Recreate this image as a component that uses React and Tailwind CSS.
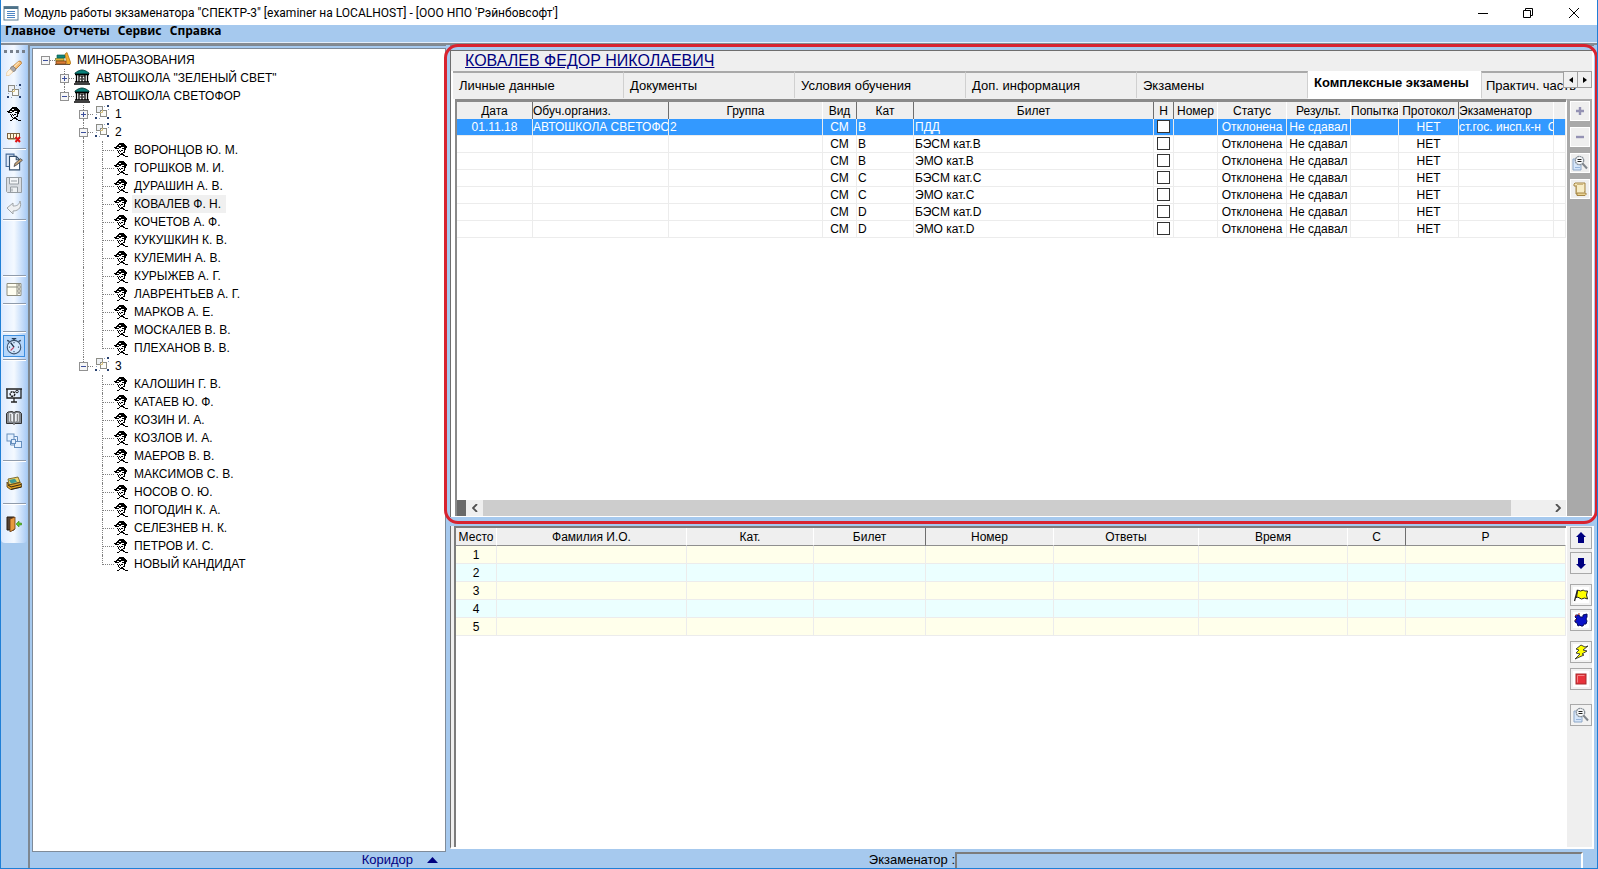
import { useState } from "react";

const groups = [
  { name: "1", open: false, people: [] },
  {
    name: "2",
    open: true,
    people: [
      "ВОРОНЦОВ Ю. М.",
      "ГОРШКОВ М. И.",
      "ДУРАШИН А. В.",
      "КОВАЛЕВ Ф. Н.",
      "КОЧЕТОВ А. Ф.",
      "КУКУШКИН К. В.",
      "КУЛЕМИН А. В.",
      "КУРЫЖЕВ А. Г.",
      "ЛАВРЕНТЬЕВ А. Г.",
      "МАРКОВ А. Е.",
      "МОСКАЛЕВ В. В.",
      "ПЛЕХАНОВ В. В.",
    ],
  },
  {
    name: "3",
    open: true,
    people: [
      "КАЛОШИН Г. В.",
      "КАТАЕВ Ю. Ф.",
      "КОЗИН И. А.",
      "КОЗЛОВ И. А.",
      "МАЕРОВ В. В.",
      "МАКСИМОВ С. В.",
      "НОСОВ О. Ю.",
      "ПОГОДИН К. А.",
      "СЕЛЕЗНЕВ Н. К.",
      "ПЕТРОВ И. С.",
      "НОВЫЙ КАНДИДАТ",
    ],
  },
];

const tabs = ["Личные данные", "Документы", "Условия обучения", "Доп. информация", "Экзамены"];

const examColumns = [
  { title: "Дата", width: "w-[76px]", dark: true },
  { title: "Обуч.организ.", width: "w-[136px]", left: true, dark: true },
  { title: "Группа", width: "w-[154px]" },
  { title: "Вид", width: "w-[34px]", dark: true },
  { title: "Кат", width: "w-[57px]", dark: true },
  { title: "Билет", width: "w-auto", dark: true },
  { title: "Н", width: "w-[20px]", dark: true },
  { title: "Номер", width: "w-[44px]" },
  { title: "Статус", width: "w-[69px]" },
  { title: "Результ.", width: "w-[64px]" },
  { title: "Попытка", width: "w-[48px]", left: true },
  { title: "Протокол", width: "w-[60px]", dark: true },
  { title: "Экзаменатор", width: "w-[95px]", left: true },
  { title: "", width: "w-[12px]" },
];

const exams = [
  { date: "01.11.18", school: "АВТОШКОЛА СВЕТОФО", group: "2", cat: "B", ticket: "ПДД", examiner: "ст.гос. инсп.к-н  С" },
  { cat: "B", ticket: "БЭСМ кат.B" },
  { cat: "B", ticket: "ЭМО кат.B" },
  { cat: "C", ticket: "БЭСМ кат.C" },
  { cat: "C", ticket: "ЭМО кат.C" },
  { cat: "D", ticket: "БЭСМ кат.D" },
  { cat: "D", ticket: "ЭМО кат.D" },
];

const seatColumns = [
  { title: "Место", width: "w-[41px]" },
  { title: "Фамилия И.О.", width: "w-[190px]" },
  { title: "Кат.", width: "w-[127px]" },
  { title: "Билет", width: "w-[112px]", dark: true },
  { title: "Номер", width: "w-[128px]" },
  { title: "Ответы", width: "w-[145px]" },
  { title: "Время", width: "w-[149px]" },
  { title: "С", width: "w-[58px]", dark: true },
  { title: "Р", width: "w-auto" },
];

/* ---------- icons ---------- */

function Svg({ size = 16, children }) {
  return (
    <svg width={size} height={size} viewBox="0 0 16 16" fill="none" className="shrink-0" aria-hidden="true">
      {children}
    </svg>
  );
}

function AppIcon() {
  return (
    <Svg>
      <rect x="1" y="1.5" width="14" height="13.5" fill="#fff" stroke="#5d7f96" />
      <path d="M1 3h14" stroke="#4d7288" strokeWidth="2" />
      <path d="M4 6.5h8M4 8.5h8M4 10.5h8M4 12.5h8" stroke="#4f86c4" />
    </Svg>
  );
}

function PersonIcon() {
  return (
    <svg width="14" height="14" viewBox="0 0 14 14" fill="none" className="shrink-0" aria-hidden="true">
      <path d="M4 1h1V0h5v1h1v1h1v1h1v2h-1v2h-1v1h-1V6H8V5H5v1H1V5H0V4h2V3h1V2h1z" fill="#000" />
      <path d="M5 2h2v1H5zM7 4h3v1H7zM3 4h2v1H3z" fill="#fff" />
      <path d="M3 7h1v1H3zM5 7h1v1H5zM7 7h2v1H7zM4 8h1v2H4zM6 8h1v1H6zM10 8h1v2h-1zM5 10h1v1H5zM7 10h2v1H7zM9 9h1v1H9zM6 11h3v1H6zM5 12h1v1H5zM9 11h1v2H9zM10 12h1v1h-1zM11 13h3v1h-3zM3 13h2v1H3z" fill="#000" />
    </svg>
  );
}

function GroupIcon() {
  return (
    <svg width="14" height="14" viewBox="0 0 14 14" fill="none" className="shrink-0" aria-hidden="true">
      <rect x="1.5" y="1.5" width="6" height="6" fill="#eef1f4" stroke="#8d8d86" />
      <rect x="5.500" y="5.500" width="6" height="6" fill="#fcfcf8" stroke="#8d8d86" />
      <path d="M7.500 5v2.500H5" stroke="#d3bd7a" />
      <path d="M12 0h2v2h-2zM0 12h2v2H0zM12 12h2v2h-2z" fill="#27406f" />
      <path d="M9 1h1v1H9zM1 9h1v1H1zM4 13h1v1H4zM13 4h1v1h-1z" fill="#8fa3c0" />
    </svg>
  );
}

function BooksIcon() {
  return (
    <Svg>
      <path d="M2 4h8v3H2z" fill="#13857b" stroke="#075e55" strokeWidth=".7" />
      <path d="M0 7.500h9v2.500H1z" fill="#e3b23a" stroke="#5d7a2c" strokeWidth=".7" />
      <path d="M1 10h10v3H1z" fill="#dc7c35" stroke="#7b4618" strokeWidth=".8" />
      <path d="M10 3l2-1.500 4 11-2 1h-2z" fill="#f2ad2c" stroke="#a36a12" strokeWidth=".7" />
      <path d="M0 13.500h15" stroke="#6a5237" />
    </Svg>
  );
}

function SchoolIcon() {
  return (
    <Svg>
      <path d="M1 5V4l3-2 3-1h2l3 1 3 2v1z" fill="#08817b" stroke="#023c3a" strokeWidth=".8" />
      <path d="M1 5.500h14M0 15h16M1 13h14" stroke="#000" strokeWidth="1.500" />
      <path d="M2.500 6v7M5 6v7M8 7v6M11 6v7M13.500 6v7" stroke="#000" strokeWidth="1.300" />
      <path d="M5 7h6" stroke="#000" />
      <path d="M6.800 9v2M9.300 9v2" stroke="#000" strokeWidth=".7" />
    </Svg>
  );
}

function HandIcon() {
  return (
    <Svg>
      <path d="M6 7l7-6 2 .5.500 2L9 10z" fill="#f5be78" stroke="#b97425" strokeWidth=".8" />
      <path d="M8 7l5-5" stroke="#fde3b8" strokeWidth="1.200" />
      <path d="M5 7l2-1 3 3-1 2-3 1-2-2z" fill="#a9a7a8" stroke="#77716f" strokeWidth=".7" />
      <path d="M4 9l3 3-4 3.500H0L1 12z" fill="#fff3df" stroke="#e6c79b" strokeWidth=".7" />
    </Svg>
  );
}

function AbacusIcon() {
  return (
    <Svg>
      <rect x="1.500" y="4.500" width="12" height="5" fill="#fff6d8" stroke="#7d6140" />
      <path d="M4.500 5v4M7.500 5v4M10.500 5v4" stroke="#7d6140" />
      <path d="M2 10.500h8" stroke="#c7b489" />
      <path d="M9.500 8l4.500 5M14 8l-4.500 5" stroke="#e01212" strokeWidth="2" />
    </Svg>
  );
}

function CopyEditIcon() {
  return (
    <Svg size={18}>
      <path d="M1 1h7v11H1z" fill="#dce9fa" stroke="#456b9b" />
      <path d="M4 3h6l3 3v9H4z" fill="#fff" stroke="#35506e" />
      <path d="M10 3v3h3" stroke="#35506e" />
      <path d="M8 12l1-3 5-4 1.500 1.500-5 4z" fill="#c7a274" stroke="#444" strokeWidth=".7" />
    </Svg>
  );
}

function SaveIcon() {
  return (
    <Svg>
      <path d="M.5.500h15v15h-14l-1-1z" fill="#d9dde2" stroke="#969da3" />
      <path d="M3.500 1v6h9V1" fill="#f4f6f8" stroke="#969da3" />
      <path d="M4.500 15v-5h7v5" fill="#eef1f3" stroke="#969da3" />
      <path d="M6 11.500v3M5 4h6" stroke="#969da3" />
    </Svg>
  );
}

function UndoIcon() {
  return (
    <Svg>
      <path d="M1 8l6-5v3c4 0 6-1 7-5 2 5-.5 10-7 10v3z" fill="#eef0f2" stroke="#9fa4a8" />
    </Svg>
  );
}

function PanelIcon() {
  return (
    <Svg>
      <path d="M1 1.500h14v12H1z" fill="#fffef0" stroke="#8e8e80" />
      <path d="M1 5h10M11 1v13M11 5h4M11 9h4" stroke="#8e8e80" />
      <path d="M12.500 3h1M12.500 7h1M12.500 11h1" stroke="#222" strokeWidth="1.500" />
    </Svg>
  );
}

function ClockIcon() {
  return (
    <Svg size={18}>
      <circle cx="8" cy="9" r="6" fill="#d5e9ff" stroke="#3e5571" />
      <path d="M6 1.500h4M2 3l2 1M14 3l-2 1M8 1v2" stroke="#253a55" strokeWidth="1.200" />
      <path d="M8 9L5 5" stroke="#20344c" strokeWidth="1.300" />
      <path d="M8 9l-3 3" stroke="#c04664" />
      <path d="M8 4.500v1M12.500 9h-1M8 13.500v-1M3.500 9h1" stroke="#3e5571" />
    </Svg>
  );
}

function BoardIcon() {
  return (
    <Svg>
      <path d="M0 2h16M1 2v9h14V2M8 11v4M5 15h6" stroke="#222" strokeWidth="1.300" />
      <circle cx="6.500" cy="7" r="2.300" stroke="#222" strokeWidth="1.500" strokeDasharray="2 .6" />
      <circle cx="11" cy="4.500" r="1.300" stroke="#222" />
    </Svg>
  );
}

function BookIcon() {
  return (
    <Svg>
      <path d="M.5 3.500L2 2l4-.5 2 1 2-1 4 .5 1.500 1.500v10H9l-1 1-1-1H.5z" fill="#858b93" stroke="#333" />
      <path d="M2.500 3l3-.5L7.500 4v8.500l-2-1-3 .5zM13.500 3l-3-.5-2 1.500v8.500l2-1 3 .5z" fill="#eef2f6" stroke="#666" strokeWidth=".6" />
      <path d="M4.500 4v7M11.500 4v7" stroke="#888" strokeWidth="1.500" />
    </Svg>
  );
}

function SquaresIcon() {
  return (
    <Svg>
      <path d="M8 3.500h3.500V9M8.500 12H4.500V7" stroke="#668fbe" />
      <rect x="1" y="1" width="7" height="7" fill="#e4f0fe" stroke="#668fbe" />
      <rect x="8.500" y="8.500" width="7" height="6" fill="#e4f0fe" stroke="#668fbe" />
      <rect x="5.500" y="6.500" width="4" height="4" fill="#e4f0fe" stroke="#668fbe" />
    </Svg>
  );
}

function CardsIcon() {
  return (
    <Svg>
      <path d="M2 4l10-2 2 5-11 3z" fill="#f0d466" stroke="#655216" strokeWidth=".8" />
      <path d="M3 5l6-1.300L11 7 5 8.500z" fill="#3f9b94" />
      <path d="M1 7l2 3 11-2.500 1.500 1V12l-11 2.500L1 12z" fill="#e3a528" stroke="#4c3810" strokeWidth=".8" />
      <path d="M2 10l3 2 10-2.500M5 14.500l10.500-2.500" stroke="#312512" />
    </Svg>
  );
}

function DoorIcon() {
  return (
    <Svg>
      <path d="M1 1h7v13H1z" fill="#554437" stroke="#271c15" />
      <path d="M4 3l5-2v12l-5 3z" fill="#e89a3f" stroke="#633711" strokeWidth=".8" />
      <path d="M10 8l3-3v2h2.500v2H13v2z" fill="#63c32b" stroke="#39871a" strokeWidth=".6" />
    </Svg>
  );
}

function SearchDocIcon() {
  return (
    <Svg>
      <path d="M1 4h8v11H1z" fill="#d6e6fa" stroke="#8da7c7" />
      <circle cx="7.500" cy="5.500" r="4.200" fill="#f7f9fb" stroke="#8a929a" strokeWidth="1.300" strokeDasharray="2 .4" />
      <path d="M5.500 4.500h4M5.500 6.500h4" stroke="#222" />
      <path d="M10.500 8.500l4.500 5" stroke="#80868c" strokeWidth="2" />
      <path d="M3 12.500h5" stroke="#96b5dc" />
    </Svg>
  );
}

function ScrollIcon() {
  return (
    <Svg>
      <path d="M3 2h10v9h-2V4H5v9H4V5H2V3z" fill="#f4e6b8" stroke="#a48545" />
      <path d="M5 4h7v8H5z" fill="#f7ecc6" />
      <path d="M5 12h9v1.500l-1 1H5z" fill="#ead393" stroke="#a48545" />
    </Svg>
  );
}

function PlusIcon() {
  return (
    <Svg>
      <path d="M8 4v8M4 8h8" stroke="#9492b4" strokeWidth="2.400" />
    </Svg>
  );
}

function MinusIcon() {
  return (
    <Svg>
      <path d="M4 8h8" stroke="#9492b4" strokeWidth="2.400" />
    </Svg>
  );
}

function UpIcon() {
  return (
    <Svg>
      <path d="M8 2l5 5h-2v6H5V7H3z" fill="#000080" />
    </Svg>
  );
}

function DownIcon() {
  return (
    <Svg>
      <path d="M8 14l5-5h-2V3H5v6H3z" fill="#000080" />
    </Svg>
  );
}

function FlagIcon() {
  return (
    <Svg>
      <rect width="16" height="16" fill="#fff" />
      <path d="M4.500 3l3 1 3-1 1 1h3l-1 4 1 4-3-1-3 1-4-2-1 1z" fill="#ffff00" stroke="#222" />
      <path d="M4.500 3L1.500 14" stroke="#222" strokeWidth="1.300" />
    </Svg>
  );
}

function BlobIcon() {
  return (
    <Svg>
      <rect width="16" height="16" fill="#fff" />
      <path d="M3 3h3l1 2h3V3l4-1v3l-1 2 1 2-1 3h-2l-1 2H8l-1-1-2 1-1-3-2-1V8l2-1-2-2z" fill="#0a12c8" stroke="#04095f" />
      <path d="M2 3l2 1M5 2h2M2 8h1" stroke="#b7321c" />
    </Svg>
  );
}

function BoltIcon() {
  return (
    <Svg>
      <rect width="16" height="16" fill="#fff" />
      <path d="M8 1L3 5l3 1-3 3 4 1-5 5 9-4-2-1 5-3-4-1 5-4-3 1z" fill="#ffff00" stroke="#333" strokeWidth=".9" />
    </Svg>
  );
}

function StopIcon() {
  return (
    <Svg>
      <rect width="16" height="16" fill="#fff" />
      <rect x="3" y="3" width="10" height="10" fill="#e8323b" stroke="#a72a2c" />
      <path d="M4.500 11.500v-7h7" stroke="#f58487" />
    </Svg>
  );
}

/* ---------- left toolbar ---------- */

function ToolButton({ label, icon, active }) {
  return (
    <button
      type="button"
      aria-label={label}
      className={
        active
          ? "flex h-[22px] w-[22px] items-center justify-center border border-[#3d8fe0] bg-[#b4d6fb]"
          : "flex h-[23px] w-6 items-center justify-center"
      }
    >
      {icon}
    </button>
  );
}

function Separator() {
  return <div className="h-[2px] w-[23px] shrink-0 border-t border-[#8f9bab] bg-white" />;
}

function Toolbar() {
  return (
    <div className="w-[26px] shrink-0 self-stretch">
      <div className="flex flex-col items-center rounded-b-sm bg-linear-to-r from-[#dceaff] via-[#f4f9ff] to-[#a9cbf5] pt-px">
        <div className="flex h-[10px] items-center gap-[3px]">
          {[0, 1, 2, 3].map((i) => (
            <span key={i} className="size-[3px] bg-[#77808c]" />
          ))}
        </div>
        <ToolButton label="Указать" icon={<HandIcon />} />
        <ToolButton label="Группы" icon={<GroupIcon />} />
        <ToolButton label="Кандидат" icon={<PersonIcon />} />
        <ToolButton label="Удалить" icon={<AbacusIcon />} />
        <Separator />
        <ToolButton label="Изменить" icon={<CopyEditIcon />} />
        <ToolButton label="Сохранить" icon={<SaveIcon />} />
        <ToolButton label="Отменить" icon={<UndoIcon />} />
        <Separator />
        <div className="h-[54px]" />
        <Separator />
        <div className="flex h-[26px] items-center">
          <ToolButton label="Панель" icon={<PanelIcon />} />
        </div>
        <Separator />
        <div className="h-[26px]" />
        <Separator />
        <div className="flex h-[26px] items-center">
          <ToolButton label="Время" icon={<ClockIcon />} active />
        </div>
        <Separator />
        <div className="pt-[22px] pb-2">
          <ToolButton label="Настройка" icon={<BoardIcon />} />
          <ToolButton label="Журнал" icon={<BookIcon />} />
          <ToolButton label="Связи" icon={<SquaresIcon />} />
        </div>
        <Separator />
        <div className="flex h-[41px] items-center">
          <ToolButton label="Архив" icon={<CardsIcon />} />
        </div>
        <Separator />
        <div className="flex h-[38px] items-center">
          <ToolButton label="Выход" icon={<DoorIcon />} />
        </div>
      </div>
    </div>
  );
}

/* ---------- tree ---------- */

function Guide({ line }) {
  return (
    <span className="h-full w-[19px] shrink-0 pl-1">
      {line && <span className="block h-full border-l border-dotted border-[#808080]" />}
    </span>
  );
}

function Expander({ open, label, onClick, up, down }) {
  return (
    <span className="flex h-full w-[14px] shrink-0 items-center">
      <span className="flex h-full w-[9px] flex-col items-center">
        <span className={up ? "h-[5px] border-l border-dotted border-[#808080]" : "h-[5px]"} />
        <button
          type="button"
          aria-label={label}
          aria-expanded={open}
          onClick={onClick}
          className="relative flex size-[9px] shrink-0 items-center justify-center border border-[#919191] bg-[#f6f6f6]"
        >
          <span className="h-px w-[5px] bg-[#3c4f9c]" />
          {!open && <span className="absolute h-[5px] w-px bg-[#3c4f9c]" />}
        </button>
        <span className={down ? "grow border-l border-dotted border-[#808080]" : "grow"} />
      </span>
      <span className="w-[5px] border-t border-dotted border-[#808080]" />
    </span>
  );
}

function Tree() {
  const [selected, setSelected] = useState("КОВАЛЕВ Ф. Н.");
  const [open, setOpen] = useState(groups.map((g) => g.open));

  const toggle = (i) => setOpen((prev) => prev.map((v, n) => (n === i ? !v : v)));

  return (
    <div className="min-h-0 grow overflow-hidden border border-[#7f8b99] bg-white pt-[2px] pl-2 text-[12px] leading-[18px]">
      <div className="flex h-[18px]">
        <Expander open label="МИНОБРАЗОВАНИЯ" />
        <BooksIcon />
        <span className="pl-[6px]">МИНОБРАЗОВАНИЯ</span>
      </div>
      <div className="flex h-[18px]">
        <Guide />
        <Expander open={false} label="ЗЕЛЕНЫЙ СВЕТ" up down />
        <SchoolIcon />
        <span className="pl-[6px]">АВТОШКОЛА "ЗЕЛЕНЫЙ СВЕТ"</span>
      </div>
      <div className="flex h-[18px]">
        <Guide />
        <Expander open label="СВЕТОФОР" up />
        <SchoolIcon />
        <span className="pl-[6px]">АВТОШКОЛА СВЕТОФОР</span>
      </div>
      {groups.map((group, i) => (
        <div key={group.name}>
          <div className="flex h-[18px]">
            <Guide />
            <Guide />
            <Expander
              open={open[i]}
              label={"Группа " + group.name}
              onClick={() => toggle(i)}
              up
              down={i < groups.length - 1}
            />
            <span className="pl-[2px]">
              <GroupIcon />
            </span>
            <span className="pl-[6px]">{group.name}</span>
          </div>
          {open[i] &&
            group.people.map((name, n) => (
              <div key={name} className="flex h-[18px]">
                <Guide />
                <Guide />
                <Guide line={i < groups.length - 1} />
                <span className="flex w-[16px] shrink-0 pl-1">
                  <span
                    className={
                      n === group.people.length - 1
                        ? "h-[10px] border-l border-dotted border-[#808080]"
                        : "h-[18px] border-l border-dotted border-[#808080]"
                    }
                  />
                  <span className="h-[10px] grow border-b border-dotted border-[#808080]" />
                </span>
                <span className="pt-[2px]">
                  <PersonIcon />
                </span>
                <button
                  type="button"
                  onClick={() => setSelected(name)}
                  className={
                    selected === name
                      ? "ml-1 bg-[#f0f0f0] pr-[5px] pl-[2px] whitespace-nowrap"
                      : "ml-1 pr-[5px] pl-[2px] whitespace-nowrap"
                  }
                >
                  {name}
                </button>
              </div>
            ))}
        </div>
      ))}
    </div>
  );
}

/* ---------- exams ---------- */

function Tabs() {
  return (
    <div className="relative flex h-7 shrink-0 overflow-hidden text-[13px]">
      <div className="w-[2px] shrink-0 bg-white" />
      {tabs.map((tab) => (
        <button
          key={tab}
          type="button"
          className="mb-px w-[171px] shrink border-t-2 border-r border-t-[#a9a9a9] border-r-[#d0d0d0] bg-[#efefef] pl-[6px] text-left whitespace-nowrap"
        >
          {tab}
        </button>
      ))}
      <button type="button" className="w-[173px] shrink-0 bg-white pb-1 pl-[6px] text-left font-bold whitespace-nowrap">
        Комплексные экзамены
      </button>
      <button
        type="button"
        className="mb-px min-w-0 grow border-t-2 border-l border-t-[#a9a9a9] border-l-[#d0d0d0] bg-[#efefef] pl-1 text-left whitespace-nowrap"
      >
        Практич. часть
      </button>
      <div className="absolute top-0 right-0 flex">
        <button type="button" aria-label="Назад" className="flex h-[17px] w-[15px] items-center justify-center border border-[#a0a0a0] bg-[#f0f0f0]">
          <svg width="4" height="6" viewBox="0 0 4 6" aria-hidden="true">
            <path d="M4 0v6L0 3z" />
          </svg>
        </button>
        <button type="button" aria-label="Вперед" className="flex h-[17px] w-[14px] items-center justify-center border border-l-0 border-[#a0a0a0] bg-[#f0f0f0]">
          <svg width="4" height="6" viewBox="0 0 4 6" aria-hidden="true">
            <path d="M0 0v6l4-3z" />
          </svg>
        </button>
      </div>
    </div>
  );
}

function ExamTable() {
  const cell = "overflow-hidden border-r border-b border-[#ececec] p-0 whitespace-pre";

  return (
    <table className="w-full table-fixed border-separate border-spacing-0 text-[12px] leading-4">
      <thead>
        <tr className="h-[17px] bg-[#efefef]">
          {examColumns.map((col) => (
            <th
              key={col.title}
              className={
                "overflow-hidden border-r p-0 font-normal whitespace-nowrap " +
                col.width +
                (col.dark ? " border-[#6e6e6e]" : " border-white") +
                (col.left ? " text-left" : " text-center")
              }
            >
              {col.title}
            </th>
          ))}
        </tr>
      </thead>
      <tbody>
        {exams.map((exam, i) => (
          <tr key={i} className={i === 0 ? "h-[17px] bg-[#3399ff] text-white" : "h-[17px]"}>
            <td className={cell + " text-center"}>{exam.date}</td>
            <td className={cell}>{exam.school}</td>
            <td className={cell + " pl-px"}>{exam.group}</td>
            <td className={cell + " text-center"}>СМ</td>
            <td className={cell + " pl-px"}>{exam.cat}</td>
            <td className={cell + " pl-px"}>{exam.ticket}</td>
            <td className={cell}>
              <input
                type="checkbox"
                aria-label={"Н " + exam.ticket}
                className="mx-auto mb-[2px] block size-[13px] appearance-none border border-[#333] bg-white checked:bg-[#333]"
              />
            </td>
            <td className={cell} />
            <td className={cell + " text-center"}>Отклонена</td>
            <td className={cell + " text-center"}>Не сдавал</td>
            <td className={cell} />
            <td className={cell + " text-center"}>НЕТ</td>
            <td className={cell}>{exam.examiner}</td>
            <td className={cell} />
          </tr>
        ))}
      </tbody>
    </table>
  );
}

function ExamPanel() {
  const side = "flex size-5 items-center justify-center border border-white bg-[#efefef]";

  return (
    <section className="relative flex min-h-0 flex-[466] flex-col border-t border-r-2 border-l border-t-[#6e6e6e] border-r-white border-l-[#6e6e6e] bg-[#efefef]">
      <h1 className="h-5 shrink-0 pl-[14px] text-[16px] leading-[19px] text-[#000080] underline">
        КОВАЛЕВ ФЕДОР НИКОЛАЕВИЧ
      </h1>
      <Tabs />
      <div className="flex min-h-0 grow border-b border-l-4 border-white">
        <div className="flex min-w-0 grow flex-col border-t-3 border-l-2 border-[#8a8a8a] bg-white">
          <div className="min-h-0 grow overflow-hidden">
            <ExamTable />
          </div>
          <div className="flex h-4 shrink-0 items-center bg-[#efefef]">
            <span className="h-full w-[9px] bg-[#696969]" />
            <button type="button" aria-label="Влево" className="flex w-[17px] justify-center">
              <svg width="6" height="8" viewBox="0 0 6 8" fill="none" aria-hidden="true">
                <path d="M5 0L1 4l4 4" stroke="#505050" strokeWidth="1.8" />
              </svg>
            </button>
            <span className="h-full grow bg-[#cdcdcd]" />
            <span className="h-full w-[38px]" />
            <button type="button" aria-label="Вправо" className="flex w-[17px] justify-center">
              <svg width="6" height="8" viewBox="0 0 6 8" fill="none" aria-hidden="true">
                <path d="M1 0l4 4-4 4" stroke="#505050" strokeWidth="1.8" />
              </svg>
            </button>
          </div>
        </div>
        <div className="flex w-[26px] shrink-0 flex-col items-center gap-[6px] border-t-2 border-l border-t-[#a9a9a9] border-l-white bg-[#a9a9a9]">
          <button type="button" aria-label="Добавить" className={side}>
            <PlusIcon />
          </button>
          <button type="button" aria-label="Убрать" className={side}>
            <MinusIcon />
          </button>
          <button type="button" aria-label="Просмотр" className={side}>
            <SearchDocIcon />
          </button>
          <button type="button" aria-label="Протокол" className={side}>
            <ScrollIcon />
          </button>
        </div>
      </div>
      <div className="pointer-events-none absolute -top-[7px] -right-[6px] -bottom-[7px] -left-[7px] rounded-[14px] border-3 border-[#d8232f]" />
    </section>
  );
}

/* ---------- seats ---------- */

function SeatPanel() {
  const side = "flex size-[22px] items-center justify-center border border-[#a9a9a9] bg-[#f2f2f2]";

  return (
    <section className="flex min-h-0 grow border-b-2 border-l border-b-white border-l-[#6e6e6e] bg-[#efefef] pl-[3px]">
      <div className="min-w-0 grow overflow-hidden border-t-2 border-l-2 border-[#7c7c7c] bg-white">
        <table className="w-full table-fixed border-separate border-spacing-0 text-[12px] leading-4">
          <thead>
            <tr className="h-[18px] bg-[#efefef]">
              {seatColumns.map((col) => (
                <th
                  key={col.title}
                  className={
                    "border-r border-b border-b-[#8f8f8f] p-0 text-center font-normal whitespace-nowrap " +
                    col.width +
                    (col.dark ? " border-r-[#6e6e6e]" : " border-r-white")
                  }
                >
                  {col.title}
                </th>
              ))}
            </tr>
          </thead>
          <tbody>
            {[1, 2, 3, 4, 5].map((n) => (
              <tr key={n} className={n % 2 ? "h-[18px] bg-[#ffffeb]" : "h-[18px] bg-[#ebffff]"}>
                {seatColumns.map((col, i) => (
                  <td key={col.title} className="border-r border-b border-[#ececec] p-0 text-center">
                    {i === 0 && n}
                  </td>
                ))}
              </tr>
            ))}
          </tbody>
        </table>
      </div>
      <div className="flex w-7 shrink-0 flex-col items-end gap-[10px] border-r-2 border-l border-white pt-px">
        <div className="flex flex-col gap-[3px]">
          <button type="button" aria-label="Вверх" className={side}>
            <UpIcon />
          </button>
          <button type="button" aria-label="Вниз" className={side}>
            <DownIcon />
          </button>
        </div>
        <div className="flex flex-col gap-[3px]">
          <button type="button" aria-label="Старт" className={side}>
            <FlagIcon />
          </button>
          <button type="button" aria-label="Сброс" className={side}>
            <BlobIcon />
          </button>
        </div>
        <div className="flex flex-col gap-[5px]">
          <button type="button" aria-label="Быстро" className={side}>
            <BoltIcon />
          </button>
          <button type="button" aria-label="Стоп" className={side}>
            <StopIcon />
          </button>
        </div>
        <button type="button" aria-label="Просмотр билета" className={side + " mt-1"}>
          <SearchDocIcon />
        </button>
      </div>
    </section>
  );
}

export default function App() {
  return (
    <div className="flex h-screen flex-col overflow-hidden border-x border-b border-[#1f7fd6] bg-[#a6c9ee] font-['Liberation_Sans',Arial,sans-serif] text-black">
      <header className="flex h-[25px] shrink-0 items-center bg-white pl-[2px]">
        <AppIcon />
        <span className="grow pl-[5px] font-[Roboto,sans-serif] text-[12px]">
          Модуль работы экзаменатора "СПЕКТР-3" [examiner на LOCALHOST] - [ООО НПО 'Рэйнбовсофт']
        </span>
        <div className="flex">
          <button type="button" aria-label="Свернуть" className="flex w-[45px] justify-center">
            <svg width="10" height="10" viewBox="0 0 10 10" stroke="#000" fill="none" aria-hidden="true">
              <path d="M0 5.500h10" />
            </svg>
          </button>
          <button type="button" aria-label="Окно" className="flex w-[45px] justify-center">
            <svg width="10" height="10" viewBox="0 0 10 10" stroke="#000" fill="none" aria-hidden="true">
              <path d="M.5 2.500h7v7h-7zM2.500 2.500v-2h7v7h-2" />
            </svg>
          </button>
          <button type="button" aria-label="Закрыть" className="flex w-[47px] justify-center">
            <svg width="10" height="10" viewBox="0 0 10 10" stroke="#000" fill="none" aria-hidden="true">
              <path d="M0 0l10 10M10 0L0 10" />
            </svg>
          </button>
        </div>
      </header>

      <nav className="flex h-[18px] shrink-0 items-start gap-2 border-b border-[#e4eefa] pl-1 font-['Noto_Sans',sans-serif] text-[12px] leading-3 font-bold">
        <button type="button">Главное</button>
        <button type="button">Отчеты</button>
        <button type="button">Сервис</button>
        <button type="button">Справка</button>
      </nav>

      <div className="flex min-h-0 grow border-t-2 border-[#858b92] pr-[3px]">
        <Toolbar />
        <div className="ml-px flex w-[418px] shrink-0 flex-col border-t border-l-2 border-[#7d8791] pt-[2px] pl-[2px]">
          <Tree />
          <div className="flex h-4 shrink-0 items-center justify-end gap-[14px] pr-2 text-[13px] leading-4 text-[#000080]">
            <button type="button">Коридор</button>
            <svg width="11" height="6" viewBox="0 0 11 6" fill="#000080" aria-hidden="true">
              <path d="M5.500 0L11 6H0z" />
            </svg>
          </div>
        </div>

        <div className="ml-[4px] flex min-w-0 grow flex-col gap-[9px] border-t border-[#7d8791] pt-[4px]">
          <ExamPanel />
          <div className="flex min-h-0 flex-[342] flex-col">
            <SeatPanel />
            <div className="flex h-[19px] shrink-0 items-end pr-[11px]">
              <label htmlFor="examiner" className="w-[505px] shrink text-right text-[13px] leading-4 whitespace-nowrap">
                Экзаменатор :
              </label>
              <input
                id="examiner"
                className="h-4 min-w-0 grow border-t-2 border-r-2 border-l-2 border-t-[#7c7c7c] border-r-white border-l-[#7c7c7c] bg-transparent px-1 text-[12px] outline-none"
              />
            </div>
          </div>
        </div>
      </div>
    </div>
  );
}
